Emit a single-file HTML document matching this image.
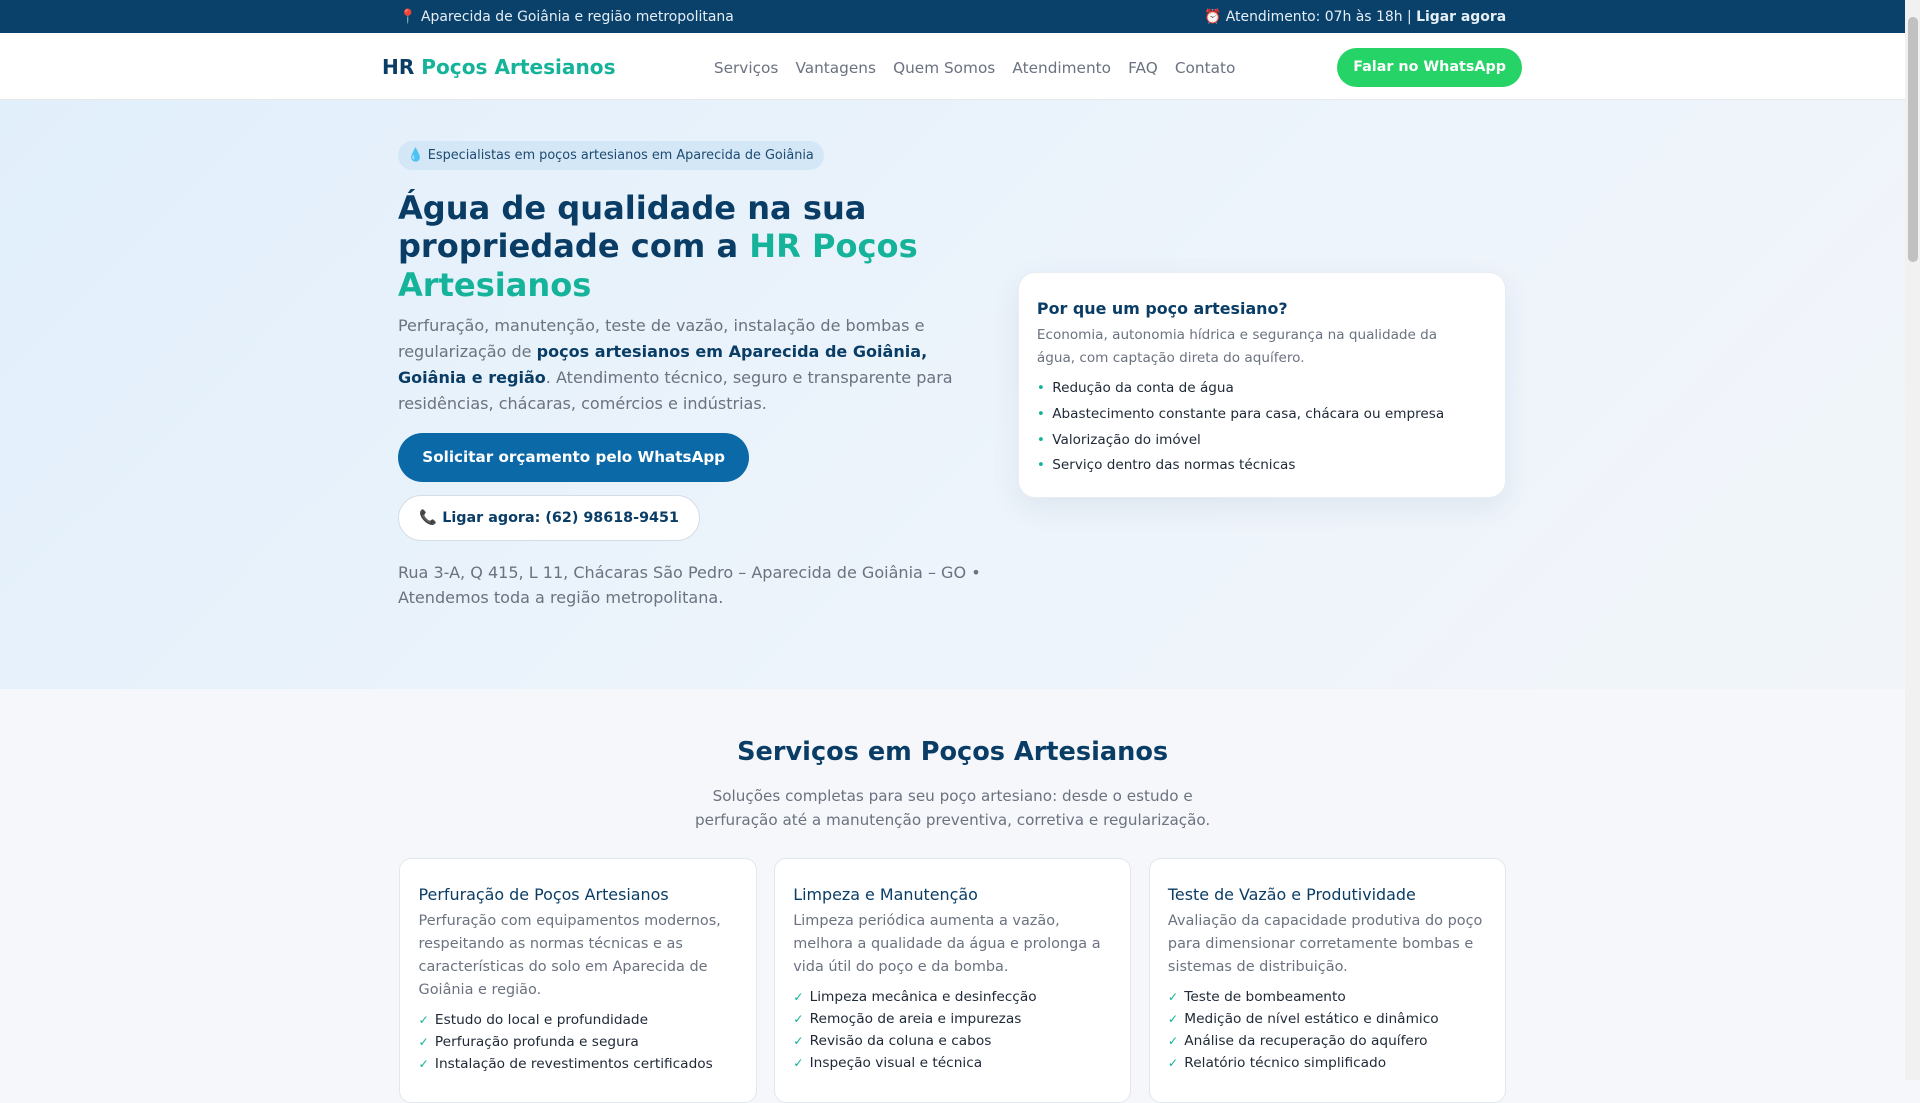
<!DOCTYPE html>
<html><head><meta charset="utf-8"><style>
html{zoom:1.22449}
*{box-sizing:border-box;margin:0;padding:0}
body{width:1568px;height:882px;overflow:hidden;font-family:"DejaVu Sans","Liberation Sans",sans-serif;background:#f5f7fa;position:relative}
.sb{position:absolute;right:0;top:0;width:12px;height:882px;background:#f1f1f1}
.sb div{position:absolute;left:2px;top:14px;width:8px;height:200px;background:#c1c1c1;border-radius:4px}
.top{height:27px;background:#0a416b;color:#e6eef5;font-size:11.4px;position:relative;width:1556px}
.top .l{position:absolute;left:326px;top:7px}
.top .r{position:absolute;right:326px;top:7px}
.nav{height:55px;background:#fff;border-bottom:1px solid #e6e9ee;position:relative;width:1556px}
.logo{position:absolute;left:312px;top:18px;font-weight:bold;font-size:16.4px;color:#0a3d66}
.logo span{color:#14b39a}
.links{position:absolute;left:583px;top:21px;font-size:12.5px;color:#6b7280}
.links span{margin-right:10px}
.wa{position:absolute;left:1092px;top:12px;width:151px;height:32px;border-radius:16px;background:#25d366;color:#fff;font-weight:bold;font-size:11.7px;text-align:center;line-height:32px}
.hero{position:absolute;top:82px;left:0;width:1556px;height:481px;background:linear-gradient(135deg,#e1effb,#eef4fb 60%,#f1f5fa)}
.badge{position:absolute;left:325px;top:33px;height:24px;padding:0 8px;border-radius:12px;background:#d3e7f6;font-size:10.5px;color:#1e4a70;line-height:24px}
h1{position:absolute;left:325px;top:72px;width:470px;font-size:26.2px;line-height:31.5px;color:#0a3d66;font-weight:bold}
h1 span{color:#14b39a}
.p{position:absolute;left:325px;top:174px;width:470px;font-size:13.1px;line-height:21px;color:#6b7280}
.p b{color:#0a3d66}
.b1{position:absolute;left:325px;top:272px;width:287px;height:40px;border-radius:20px;background:#0b69a7;color:#fff;font-weight:bold;font-size:12.4px;text-align:center;line-height:40px}
.b2{position:absolute;left:325px;top:322px;width:247px;height:38px;border-radius:19px;background:#fff;border:1px solid #d5dde6;color:#0a3d66;font-weight:bold;font-size:11.7px;text-align:center;line-height:36px}
.addr{position:absolute;left:325px;top:375px;width:490px;font-size:13.1px;line-height:21px;color:#6b7280}
.card{position:absolute;left:831px;top:140px;width:399px;height:185px;background:#fff;border-radius:14px;box-shadow:0 8px 24px rgba(20,60,100,.08);border:1px solid #e7edf3;padding:21px 15px}
.card h3{font-size:13px;color:#0a3d66;margin-bottom:5px}
.card p{font-size:11.1px;color:#6b7280;line-height:19px;margin-bottom:5px;padding-right:20px}
.card li{list-style:none;font-size:11.1px;color:#1f2937;line-height:21px}
.card li:before{content:"•";color:#14b39a;margin-right:6px}
h2{position:absolute;top:602px;left:0;width:1556px;text-align:center;font-size:20.9px;color:#0a3d66;font-weight:bold}
.sub{position:absolute;top:640px;left:0;width:1556px;text-align:center;font-size:12.4px;line-height:20px;color:#6b7280}
.sc{position:absolute;top:701px;width:292px;height:200px;background:#fff;border:1px solid #e3e7ec;border-radius:10px;padding:21px 15px}
.sc h4{font-weight:normal;font-size:13px;color:#0a3d66;margin-bottom:5px}
.sc p{font-size:11.8px;line-height:18.7px;color:#6b7280;margin-bottom:7px}
.sc li{list-style:none;font-size:11.2px;line-height:17.8px;color:#1f2937}
.sc li:before{content:"✓";color:#14b39a;margin-right:5px;font-size:10px}
</style></head><body>
<div class="top"><div class="l">📍 Aparecida de Goiânia e região metropolitana</div><div class="r">⏰ Atendimento: 07h às 18h | <b>Ligar agora</b></div></div>
<div class="nav"><div class="logo">HR <span>Poços Artesianos</span></div>
<div class="links"><span>Serviços</span> <span>Vantagens</span> <span>Quem Somos</span> <span>Atendimento</span> <span>FAQ</span> <span>Contato</span></div>
<div class="wa">Falar no WhatsApp</div></div>
<div class="hero">
<div class="badge">💧 Especialistas em poços artesianos em Aparecida de Goiânia</div>
<h1>Água de qualidade na sua propriedade com a <span>HR Poços Artesianos</span></h1>
<div class="p">Perfuração, manutenção, teste de vazão, instalação de bombas e regularização de <b>poços artesianos em Aparecida de Goiânia, Goiânia e região</b>. Atendimento técnico, seguro e transparente para residências, chácaras, comércios e indústrias.</div>
<div class="b1">Solicitar orçamento pelo WhatsApp</div>
<div class="b2">📞 Ligar agora: (62) 98618-9451</div>
<div class="addr">Rua 3-A, Q 415, L 11, Chácaras São Pedro – Aparecida de Goiânia – GO • Atendemos toda a região metropolitana.</div>
<div class="card"><h3>Por que um poço artesiano?</h3><p>Economia, autonomia hídrica e segurança na qualidade da água, com captação direta do aquífero.</p>
<ul><li>Redução da conta de água</li><li>Abastecimento constante para casa, chácara ou empresa</li><li>Valorização do imóvel</li><li>Serviço dentro das normas técnicas</li></ul></div>
</div>
<h2>Serviços em Poços Artesianos</h2>
<div class="sub">Soluções completas para seu poço artesiano: desde o estudo e<br>perfuração até a manutenção preventiva, corretiva e regularização.</div>
<div class="sc" style="left:326px"><h4>Perfuração de Poços Artesianos</h4><p>Perfuração com equipamentos modernos, respeitando as normas técnicas e as características do solo em Aparecida de Goiânia e região.</p><ul><li>Estudo do local e profundidade</li><li>Perfuração profunda e segura</li><li>Instalação de revestimentos certificados</li></ul></div>
<div class="sc" style="left:632px"><h4>Limpeza e Manutenção</h4><p>Limpeza periódica aumenta a vazão, melhora a qualidade da água e prolonga a vida útil do poço e da bomba.</p><ul><li>Limpeza mecânica e desinfecção</li><li>Remoção de areia e impurezas</li><li>Revisão da coluna e cabos</li><li>Inspeção visual e técnica</li></ul></div>
<div class="sc" style="left:938px"><h4>Teste de Vazão e Produtividade</h4><p>Avaliação da capacidade produtiva do poço para dimensionar corretamente bombas e sistemas de distribuição.</p><ul><li>Teste de bombeamento</li><li>Medição de nível estático e dinâmico</li><li>Análise da recuperação do aquífero</li><li>Relatório técnico simplificado</li></ul></div>
<div class="sb"><div></div></div>
</body></html>
